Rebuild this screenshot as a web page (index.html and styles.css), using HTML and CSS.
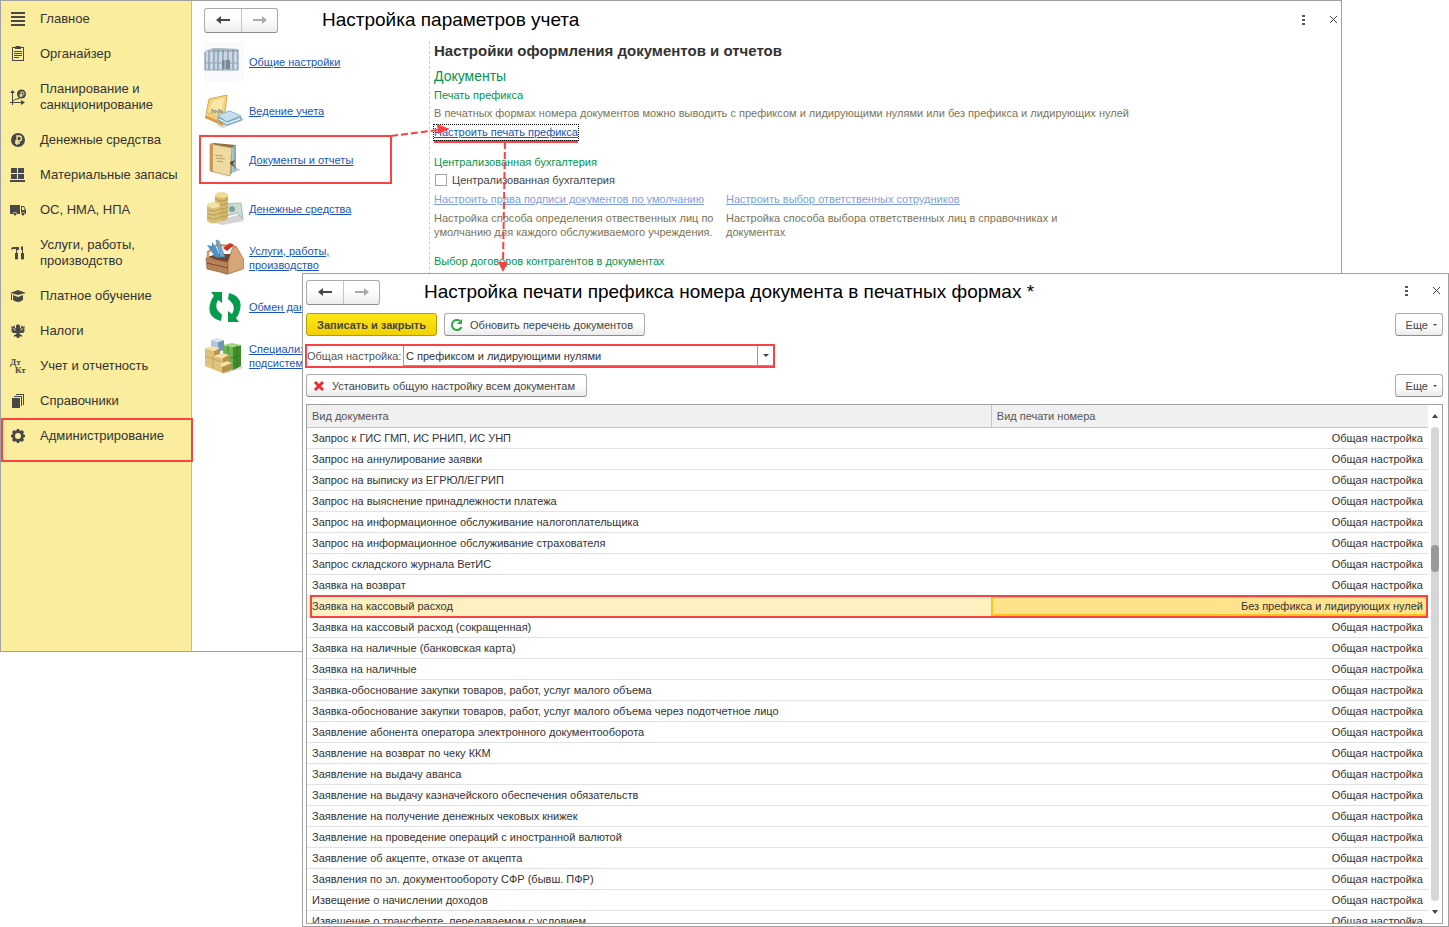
FILE: index.html
```html
<!DOCTYPE html>
<html lang="ru">
<head>
<meta charset="utf-8">
<title>Настройка параметров учета</title>
<link rel="stylesheet" href="styles.css">
</head>
<body>
<div class="desktop">
<section class="window main-window">
  <nav class="sidebar">
    <a class="side-item" href="#"><svg class="side-icon" viewBox="0 0 16 16"><path d="M1 1h14v2H1zM1 5h14v2H1zM1 9h14v2H1zM1 13h14v2H1z"/></svg><span>Главное</span></a>
    <a class="side-item" href="#"><svg class="side-icon" viewBox="0 0 16 16"><path d="M2 1h3l1-1h4l1 1h3v14H2zM3 2v12h10V2h-2v1H5V2zM4 5h8v1H4zm0 2h8v1H4zm0 2h8v1H4zm0 2h5v1H4z" fill-rule="evenodd"/></svg><span>Органайзер</span></a>
    <a class="side-item" href="#"><svg class="side-icon" viewBox="0 0 16 16"><path d="M2.5 2v14M0 13.500h14" stroke="#484848" fill="none"/><path d="M0 4l2.500-3L5 4zM11 11l4 2.500-4 2.500z"/><path d="M3 12l3-2h2l2-1" stroke="#484848" fill="none"/><circle cx="11.500" cy="5" r="4.500"/><path d="M11 8V3h1.500a1 1 0 010 3H9.500m0 1h3" stroke="#fbed9e" fill="none"/></svg><span>Планирование и санкционирование</span></a>
    <a class="side-item" href="#"><svg class="side-icon" viewBox="0 0 16 16"><circle cx="8" cy="8" r="7"/><path d="M7 13V4h2a2 2 0 010 5H5m0 2h5" stroke="#fbed9e" stroke-width="1.3" fill="none"/></svg><span>Денежные средства</span></a>
    <a class="side-item" href="#"><svg class="side-icon" viewBox="0 0 16 16"><path d="M1 1h6v5H1zM8 1h6v5H8zM1 7h6v5H1zM8 7h6v5H8zM0 13h15v2H0z"/></svg><span>Материальные запасы</span></a>
    <a class="side-item" href="#"><svg class="side-icon" viewBox="0 0 16 16"><path d="M0 3h10v9H7a2 2 0 00-4 0H0zM11 4h3l2 4v4h-1a2 2 0 00-4 0zm1 1v3h3l-1.500-3z" fill-rule="evenodd"/><circle cx="5" cy="12" r="1.500"/><circle cx="13" cy="12" r="1.500"/></svg><span>ОС, НМА, НПА</span></a>
    <a class="side-item" href="#"><svg class="side-icon" viewBox="0 0 16 16"><path d="M1 3l2-1h6v3H7v3h1v6q-2 1-3 0V8h1V4H3L2 5zM11 2l1-1 1 1v6h1v6q-2 1-3 0V8h1V5h-1z"/></svg><span>Услуги, работы, производство</span></a>
    <a class="side-item" href="#"><svg class="side-icon" viewBox="0 0 16 16"><path d="M0 5l8-3 8 3-8 2zM3 7l5 2 5-2v5q-5 4-10 0zM1 6h1v6H1z"/></svg><span>Платное обучение</span></a>
    <a class="side-item" href="#"><svg class="side-icon" viewBox="0 0 16 16"><path d="M8 2l1-1 1 2v2h1V2l1 2 1-2v2l2-1-1 3h1l-1 2h1l-2 2H9l2 2h1v2l-2-1-1 2H7l-1-2-2 1v-2h1l2-2H3L1 8h1L1 6h1L1 3l2 1V2l1 2 1-2v3h1V3l1-2z"/><path d="M5 5v3m6-3v3M3 5l1 2m9-2l-1 2" stroke="#fbed9e" stroke-width=".6"/></svg><span>Налоги</span></a>
    <a class="side-item" href="#"><svg class="side-icon" viewBox="0 0 16 16"><text x="0" y="7" class="dtkt">Дт</text><text x="5" y="15" class="dtkt">Кт</text></svg><span>Учет и отчетность</span></a>
    <a class="side-item" href="#"><svg class="side-icon" viewBox="0 0 16 16"><path d="M2 5h8v10H2zM4 3h8v10h-1V4H4zM6 1h8v11h-1V2H6z"/></svg><span>Справочники</span></a>
    <a class="side-item marked" href="#"><svg class="side-icon" viewBox="0 0 16 16"><path d="M7 1h2l1 2 2-1 2 2-1 2 2 1v2l-2 1 1 2-2 2-2-1-1 2H7l-1-2-2 1-2-2 1-2-2-1V7l2-1-1-2 2-2 2 1zM8 5a3 3 0 100 6 3 3 0 000-6z" fill-rule="evenodd"/></svg><span>Администрирование</span></a>
  </nav>

  <div class="workspace">
    <header class="titlebar">
      <div class="history">
        <button type="button" aria-label="Назад"><svg viewBox="0 0 14 10"><path d="M0 5l5-4v3h9v2H5v3z" fill="#484848"/></svg></button>
        <button type="button" aria-label="Вперед"><svg viewBox="0 0 14 10"><path d="M14 5L9 1v3H0v2h9v3z" fill="#ababab"/></svg></button>
      </div>
      <h1>Настройка параметров учета</h1>
      <div class="window-tools">
        <button type="button" aria-label="Меню"><svg viewBox="0 0 12 12"><path d="M5 1h3v2H5zM5 5h3v2H5zM5 9h3v2H5z" fill="#555"/></svg></button>
        <button type="button" aria-label="Закрыть"><svg viewBox="0 0 12 12"><path d="M3 2l7 7m0-7l-7 7" stroke="#444" fill="none"/></svg></button>
      </div>
    </header>

    <div class="columns">
      <nav class="sections">
        <a class="section" href="#"><svg viewBox="0 0 40 40"><rect width="40" height="40" fill="#fafafd"/><path d="M1 9l9-3 24 1v21H1z" fill="#c9d8e4"/><path d="M1 9l9-3 24 1v3H10z" fill="#a5b5c2"/><path d="M1 10v18m4-19v19m5-20v20m4-20v20m5-20v20m5-20v20m5-20v20m5-20v20" stroke="#6e8496" fill="none"/><path d="M1 21h33M1 28h33" stroke="#8fa5b5"/><path d="M18 18h8v9h-8z" fill="#7b8996"/><path d="M21 18v9" stroke="#bcd"/></svg><span>Общие настройки</span></a>
        <a class="section" href="#"><svg viewBox="0 0 40 40"><path d="M2 23L5 8 23 4l-2 18z" fill="#f5d47f" stroke="#d9a94e"/><path d="M5 22L8 10l12-3-2 12z" fill="#fbe6a8"/><path d="M12 34l26-7 3 2-22 8z" fill="#aaa" opacity=".5"/><path d="M1 24l18-4 18 5-18 9z" fill="#f0cd80"/><path d="M1 24v3l18 8v-3z" fill="#d69d42"/><path d="M14 24l12-4 11 5-15 6z" fill="#c4dfee" stroke="#8ab3cb"/><path d="M14 26l9 5 14-5v3l-14 5-9-5z" fill="#d8eaf3" stroke="#6899b6"/><path d="M8 22v-4l3 4v-3l4 3v-4l3 4v-3" stroke="#788" fill="none"/></svg><span>Ведение учета</span></a>
        <a class="section marked" href="#"><svg viewBox="0 0 40 40"><path d="M18 36l19-6-5-3z" fill="#aaa" opacity=".6"/><path d="M6 4l4-1 22 2-4 3z" fill="#8e7141"/><path d="M27 8l5-3v25l-7 6z" fill="#82adbd"/><path d="M29 8v25" stroke="#c9e1e8"/><path d="M6 4l22 4-2 28-20-5z" fill="#efdba1" stroke="#b6934d" stroke-width=".7"/><path d="M6 4l3 1v27l-3-1z" fill="#c79a56"/><path d="M11 15l8 1m-7 2l9 1m-8 2l6 1" stroke="#8e7342" stroke-width=".6"/><path d="M26 22l5-2-2 4 3 4-6-4z" fill="#6c5030"/></svg><span>Документы и отчеты</span></a>
        <a class="section" href="#"><svg viewBox="0 0 40 40"><path d="M8 33l29-8 3 7-22 4z" fill="#aaa" opacity=".5"/><path d="M22 15l15-1 2 16-6-6-11 3z" fill="#cedbd0" stroke="#a9bcb0"/><circle cx="28" cy="20" r="3" fill="#7ea39a"/><path d="M11 6v24q7 4 13 0V6z" fill="#d4b765"/><ellipse cx="17.500" cy="6" rx="6.500" ry="3" fill="#f1dc94"/><path d="M11 10q7 4 13 0M11 14q7 4 13 0M11 18q7 4 13 0M11 22q7 4 13 0M11 26q7 4 13 0" stroke="#b69a54" fill="none"/><path d="M3 16v16q6 5 13 0V16z" fill="#dac17a"/><ellipse cx="9.500" cy="16" rx="6.500" ry="3" fill="#f3e1a1"/><path d="M3 20q6 4 13 0M3 24q6 4 13 0M3 28q6 4 13 0" stroke="#b69a54" fill="none"/></svg><span>Денежные средства</span></a>
        <a class="section" href="#"><svg viewBox="0 0 40 40"><path d="M18 36l19-9 3 5-18 5z" fill="#aaa" opacity=".5"/><path d="M3 19l10-3h16l-6 9z" fill="#70472e"/><path d="M4 20V14L13 7l16 1 3 3" stroke="#d09a66" stroke-width="2.500" fill="none"/><path d="M3 7l5 1V4l5 7 3 9-5-1z" fill="#4b93c4"/><path d="M12 2l3 1 6 16h-5z" fill="#70a9cf" stroke="#3e7ca8" stroke-width=".6"/><path d="M19 10l7-5 4 2-7 6z" fill="#d32e27"/><path d="M2 20l22 4v12L3 31z" fill="#b98358" stroke="#8d5837" stroke-width=".7"/><path d="M3 25l21 5" stroke="#7c4b31"/><path d="M24 24l4-13 4-3 8 14v8l-16 6z" fill="#d6a678" stroke="#9d6841" stroke-width=".7"/></svg><span>Услуги, работы, производство</span></a>
        <a class="section" href="#"><svg viewBox="0 0 40 40"><g fill="#079b4c"><path id="arc" d="M7 5h11v11l-4-3q-5 8 4 15l-1 6Q1 30 7 14q1-3 3-5z"/><path transform="rotate(180 21 20)" d="M7 5h11v11l-4-3q-5 8 4 15l-1 6Q1 30 7 14q1-3 3-5z"/></g></svg><span>Обмен данными</span></a>
        <a class="section" href="#"><svg viewBox="0 0 40 40"><path d="M18 36l18-8 3 4-20 6z" fill="#aaa" opacity=".5"/><path d="M19 9l10 2v23l-10-3z" fill="#6db551"/><path d="M29 11l8-2v21l-8 4z" fill="#3f8f2c"/><path d="M19 9l9-2 9 2-8 2z" fill="#a1d67b"/><path d="M19 20l10 2 8-3M33 10v22M24 10v20M29 29l8-3" stroke="#2f7620" fill="none" stroke-width=".7"/><path d="M7 4l7 2v9l-7-2z" fill="#a9c8dc"/><path d="M14 6l6-2v10l-6 2z" fill="#6e98b5"/><path d="M7 4l6-2 7 2-6 2z" fill="#d4e5ef"/><path d="M1 12l9 3v5l9 2v5l7 2v7l-8 1-17-7z" fill="#dfc27a"/><path d="M10 15l6-2v6l-6 1zM19 20l7-2v7l-7 2z" fill="#b79349"/><path d="M18 30l9-3v7l-9 3z" fill="#b79349"/><path d="M1 12l7-2 8 2-6 3zM10 20l8-3 7 2-6 3zM16 28l7-3 5 2-10 4z" fill="#f7e2a5"/><path d="M1 20l17 6M9 20v12" stroke="#b69656" stroke-width=".7"/></svg><span>Специализированные подсистемы</span></a>
      </nav>

      <main class="settings">
        <h2>Настройки оформления документов и отчетов</h2>
        <h3 class="group-title">Документы</h3>
        <h4>Печать префикса</h4>
        <p class="hint">В печатных формах номера документов можно выводить с префиксом и лидирующими нулями или без префикса и лидирующих нулей</p>
        <a class="link focused" href="#">Настроить печать префикса</a>
        <h4 class="spaced">Централизованная бухгалтерия</h4>
        <label class="check"><input type="checkbox"><span>Централизованная бухгалтерия</span></label>
        <div class="link-grid">
          <div><a class="link faded" href="#">Настроить права подписи документов по умолчанию</a><p class="hint">Настройка способа определения отвественных лиц по умолчанию для каждого обслуживаемого учреждения.</p></div>
          <div><a class="link faded" href="#">Настроить выбор ответственных сотрудников</a><p class="hint">Настройка способа выбора ответственных лиц в справочниках и документах</p></div>
        </div>
        <h4 class="contracts">Выбор договоров контрагентов в документах</h4>
      </main>
    </div>
  </div>
  <svg class="arrows" viewBox="0 0 430 290" aria-hidden="true"><g stroke="#fb4141" stroke-width="2" fill="none" stroke-dasharray="7 3"><path d="M189 136L236 130"/><path d="M303 142L301 264"/></g><path d="M235 124l13 5-12 5zM296 262h10l-5 10z" fill="#fb4141"/></svg>
</section>

<section class="window dialog">
  <header class="titlebar">
    <div class="history">
      <button type="button" aria-label="Назад"><svg viewBox="0 0 14 10"><path d="M0 5l5-4v3h9v2H5v3z" fill="#484848"/></svg></button>
      <button type="button" aria-label="Вперед"><svg viewBox="0 0 14 10"><path d="M14 5L9 1v3H0v2h9v3z" fill="#ababab"/></svg></button>
    </div>
    <h1>Настройка печати префикса номера документа в печатных формах *</h1>
    <div class="window-tools">
      <button type="button" aria-label="Меню"><svg viewBox="0 0 12 12"><path d="M5 0h3v2H5zM5 4h3v2H5zM5 8h3v2H5z" fill="#555"/></svg></button>
      <button type="button" aria-label="Закрыть"><svg viewBox="0 0 12 12"><path d="M3 1l7 7m0-7l-7 7" stroke="#444" fill="none"/></svg></button>
    </div>
  </header>
  <div class="toolbar">
    <button type="button" class="btn primary">Записать и закрыть</button>
    <button type="button" class="btn"><svg viewBox="0 0 14 14"><path d="M10 3a5 5 0 101.500 6" stroke="#2ba84a" stroke-width="2" fill="none"/><path d="M7 6h5V1z" fill="#2ba84a"/></svg>Обновить перечень документов</button>
    <button type="button" class="btn more">Еще<i class="caret"></i></button>
  </div>
  <div class="field">
    <label for="common">Общая настройка:</label>
    <div class="select-box"><select id="common"><option>С префиксом и лидирующими нулями</option></select><i class="drop"></i></div>
  </div>
  <div class="toolbar">
    <button type="button" class="btn all"><svg viewBox="0 0 14 14"><path d="M3 3l8 8m0-8l-8 8" stroke="#ee2e2e" stroke-width="3" fill="none"/></svg>Установить общую настройку всем документам</button>
    <button type="button" class="btn more">Еще<i class="caret"></i></button>
  </div>
  <div class="grid-box">
    <div class="grid-view">
    <table>
      <thead><tr><th>Вид документа</th><th>Вид печати номера</th></tr></thead>
      <tbody>
        <tr><td>Запрос к ГИС ГМП, ИС РНИП, ИС УНП</td><td>Общая настройка</td></tr>
        <tr><td>Запрос на аннулирование заявки</td><td>Общая настройка</td></tr>
        <tr><td>Запрос на выписку из ЕГРЮЛ/ЕГРИП</td><td>Общая настройка</td></tr>
        <tr><td>Запрос на выяснение принадлежности платежа</td><td>Общая настройка</td></tr>
        <tr><td>Запрос на информационное обслуживание налогоплательщика</td><td>Общая настройка</td></tr>
        <tr><td>Запрос на информационное обслуживание страхователя</td><td>Общая настройка</td></tr>
        <tr><td>Запрос складского журнала ВетИС</td><td>Общая настройка</td></tr>
        <tr><td>Заявка на возврат</td><td>Общая настройка</td></tr>
        <tr class="selected"><td>Заявка на кассовый расход</td><td>Без префикса и лидирующих нулей</td></tr>
        <tr><td>Заявка на кассовый расход (сокращенная)</td><td>Общая настройка</td></tr>
        <tr><td>Заявка на наличные (банковская карта)</td><td>Общая настройка</td></tr>
        <tr><td>Заявка на наличные</td><td>Общая настройка</td></tr>
        <tr><td>Заявка-обоснование закупки товаров, работ, услуг малого объема</td><td>Общая настройка</td></tr>
        <tr><td>Заявка-обоснование закупки товаров, работ, услуг малого объема через подотчетное лицо</td><td>Общая настройка</td></tr>
        <tr><td>Заявление абонента оператора электронного документооборота</td><td>Общая настройка</td></tr>
        <tr><td>Заявление на возврат по чеку ККМ</td><td>Общая настройка</td></tr>
        <tr><td>Заявление на выдачу аванса</td><td>Общая настройка</td></tr>
        <tr><td>Заявление на выдачу казначейского обеспечения обязательств</td><td>Общая настройка</td></tr>
        <tr><td>Заявление на получение денежных чековых книжек</td><td>Общая настройка</td></tr>
        <tr><td>Заявление на проведение операций с иностранной валютой</td><td>Общая настройка</td></tr>
        <tr><td>Заявление об акцепте, отказе от акцепта</td><td>Общая настройка</td></tr>
        <tr><td>Заявления по эл. документообороту СФР (бывш. ПФР)</td><td>Общая настройка</td></tr>
        <tr><td>Извещение о начислении доходов</td><td>Общая настройка</td></tr>
        <tr><td>Извещение о трансферте, передаваемом с условием</td><td>Общая настройка</td></tr>
      </tbody>
    </table>
    </div>
    <div class="scrollbar"><i class="up"></i><div class="track"><div class="thumb"></div></div><i class="down"></i></div>
  </div>
</section>
</div>
</body>
</html>
```
FILE: styles.css
```css
* { box-sizing: border-box; }
body { margin: 0; background: #fff; color: #333; font: 11px/14px "Liberation Sans", Arial, sans-serif; }
button, select, input { font: inherit; color: inherit; }
h1, h2, h3, h4, p { margin: 0; font-weight: normal; }
.desktop { position: relative; height: 100vh; overflow: hidden; }
.window { position: absolute; background: #fff; border: 1px solid #a0a0a0; }
.main-window { inset: 0 107px 275px 0; display: flex; }
.dialog { inset: 273px 0 0 302px; display: flex; flex-direction: column; padding: 0 5px 2px 3px; }

/* Sidebar */
.sidebar { width: 191px; flex: none; background: #fbed9e; border-right: 1px solid #c9bd80; }
.side-item { position: relative; display: flex; align-items: center; gap: 14px; padding: 10px 8px 9px 9px; color: #333; font-size: 13px; line-height: 16px; text-decoration: none; }
.side-icon { width: 16px; height: 16px; flex: none; fill: #484848; overflow: visible; }
.dtkt { font: bold 9px "Liberation Serif", serif; }
.side-item.marked::after { content: ""; position: absolute; inset: 0 -2px -9px 0; border: 2px solid #fb4141; }

/* Title bars */
.workspace { flex: 1; min-width: 0; padding-left: 12px; }
.titlebar { display: flex; align-items: center; height: 38px; }
.dialog .titlebar { height: 36px; flex: none; }
.titlebar h1 { flex: 1; padding-left: 44px; color: #000; font-size: 19px; line-height: 22px; white-space: nowrap; }
.history { display: flex; height: 25px; border: 1px solid #ababab; border-bottom-color: #8c8c8c; border-radius: 3px; background: linear-gradient(#fff 40%, #ececec); }
.history button { width: 36px; padding: 0; border: 0; background: none; display: grid; place-items: center; }
.history button + button { border-left: 1px solid #c4c4c4; }
.history svg { width: 14px; height: 10px; }
.window-tools { display: flex; gap: 18px; padding-right: 2px; }
.dialog .window-tools { padding-right: 1px; }
.window-tools button { width: 12px; height: 12px; padding: 0; border: 0; background: none; }
.window-tools svg { display: block; width: 12px; height: 12px; }

/* Section list */
.columns { display: flex; }
.sections { width: 225px; flex: none; margin-top: -2px; }
.section { position: relative; display: flex; align-items: center; gap: 5px; height: 49px; color: #1a56b8; text-decoration: none; }
.section svg { width: 40px; height: 40px; flex: none; }
.section span { width: 120px; text-decoration: underline; }
.section.marked::after { content: ""; position: absolute; inset: 0 37px 0 -5px; border: 2px solid #fb4141; }

/* Settings */
.settings { flex: 1; min-width: 0; margin-top: 2px; padding-left: 4px; border-left: 1px dashed #ccc; }
.settings h2 { font-size: 15px; line-height: 20px; font-weight: bold; color: #333; }
.settings .group-title { font-size: 14px; line-height: 20px; margin-top: 5px; color: #00964b; }
.settings h4 { font-size: 11px; line-height: 18px; color: #00964b; }
.hint { color: #7b7455; line-height: 14px; }
h4 + .hint { margin-top: 2px; }
.link { color: #1a56b8; text-decoration: underline; }
.focused { display: inline-block; margin-top: 5px; line-height: 15px; outline: 1px dotted #000; box-shadow: 0 3px #fb4141; }
.settings .spaced { margin-top: 13px; }
.check { display: flex; align-items: center; gap: 5px; height: 18px; color: #444; }
.check input { appearance: none; width: 12px; height: 12px; margin: 0 0 0 1px; border: 1px solid #a0a0a0; background: #fff; }
.link-grid { display: flex; gap: 6px; margin-top: 3px; }
.link-grid > div { width: 286px; }
.link-grid > div + div { width: 350px; }
.link-grid .hint { margin-top: 5px; }
.faded { color: #7d9fe0; }
.settings .contracts { margin-top: 13px; }
.arrows { position: absolute; left: 201px; top: -1px; width: 430px; height: 290px; }

/* Dialog controls */
.toolbar { display: flex; gap: 7px; margin-top: 3px; flex: none; }
.btn { height: 23px; padding: 0 11px; display: flex; align-items: center; border: 1px solid #ababab; border-bottom-color: #8c8c8c; border-radius: 3px; background: linear-gradient(#fff 50%, #ebebeb); color: #444; white-space: nowrap; }
.btn svg { width: 14px; height: 14px; margin: 0 6px 0 -6px; }
.primary { padding: 0 10px; border-color: #b39b00; background: linear-gradient(#ffe81a, #f0d000); font-weight: bold; }
.more { margin-left: auto; padding: 0 5px 0 10px; gap: 5px; }
.caret { border: 2px solid transparent; border-top-color: #444; border-bottom: 0; }
.field { display: flex; align-items: center; align-self: flex-start; width: 470px; height: 24px; margin: 8px 0 3px -1px; border: 2px solid #fb4141; flex: none; }
.field label { flex: none; width: 96px; color: #555; }
.select-box { flex: 1; height: 20px; display: flex; position: relative; border-left: 1px solid #999; border-bottom: 1px solid #999; }
.select-box select { appearance: none; flex: 1; padding: 0 2px; border: 0; background: none; color: #333; }
.drop { position: absolute; right: 0; top: 0; width: 16px; height: 20px; border-left: 1px solid #999; pointer-events: none; }
.drop::after { content: ""; display: block; margin: 8px 5px; width: 0; border: 3px solid transparent; border-top-color: #444; border-bottom: 0; }

/* Table */
.grid-box { flex: 1; min-height: 0; margin-top: 7px; display: flex; border: 1px solid #a0a0a0; }
.grid-view { flex: 1; min-width: 0; overflow: hidden; }
table { width: 100%; border-collapse: separate; border-spacing: 0; table-layout: fixed; }
th { width: 61%; height: 23px; padding: 0 5px; text-align: left; font-weight: normal; background: #f0f0f0; border-bottom: 1px solid #c4c4c4; color: #555; }
th + th { width: 39%; border-left: 1px solid #c4c4c4; }
td { height: 21px; padding: 0 5px; border-bottom: 1px solid #e2e2e2; white-space: nowrap; }
td + td { text-align: right; }
.selected { position: relative; }
.selected td { background: #fff0c1; }
.selected td + td { background: #ffe38c; box-shadow: inset 0 0 0 2px #fcc419; }
.selected td:first-child::after { content: ""; position: absolute; inset: -1px 0 -1px 3px; border: 2px solid #fb4141; z-index: 1; }
.scrollbar { width: 14px; flex: none; display: flex; flex-direction: column; align-items: center; }
.up { margin: 9px 0; border: 3px solid transparent; border-bottom: 4px solid #444; border-top: 0; }
.down { margin: 9px 0; border: 3px solid transparent; border-top: 4px solid #444; border-bottom: 0; }
.track { flex: 1; width: 8px; border-radius: 4px; background: #d6d6d6; padding-top: 118px; }
.thumb { height: 27px; border-radius: 4px; background: #999; }
```
